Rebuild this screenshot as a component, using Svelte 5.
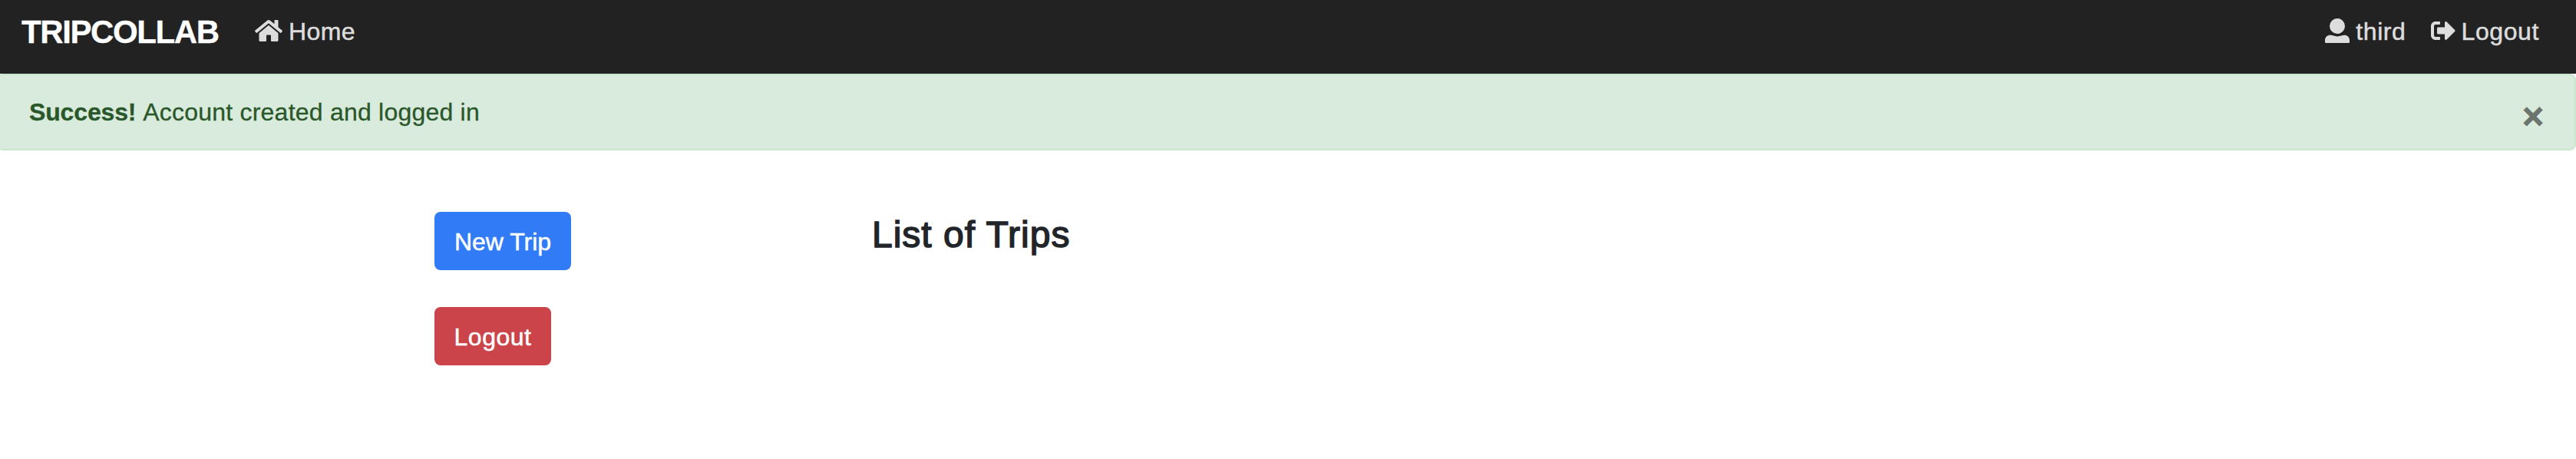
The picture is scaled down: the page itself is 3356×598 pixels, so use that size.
<script>
  const icons = {
    home: { w: 576, d: 'M488 312.7V456c0 13.3-10.7 24-24 24H348c-6.600 0-12-5.400-12-12V356c0-6.600-5.400-12-12-12h-72c-6.600 0-12 5.400-12 12v112c0 6.600-5.400 12-12 12H112c-13.300 0-24-10.700-24-24V312.700c0-3.600 1.600-7 4.400-9.300l188-154.800c4.400-3.600 10.800-3.600 15.300 0l188 154.800c2.700 2.300 4.300 5.700 4.300 9.300zm83.600-60.900L488 182.900V44.400c0-6.600-5.400-12-12-12h-56c-6.600 0-12 5.400-12 12V117l-89.500-73.700c-17.700-14.600-43.300-14.600-61 0L4.400 251.800c-5.100 4.200-5.800 11.800-1.600 16.900l25.500 31c4.200 5.100 11.800 5.800 16.900 1.600l235.200-193.700c4.400-3.600 10.800-3.600 15.300 0l235.200 193.700c5.100 4.200 12.700 3.500 16.900-1.600l25.500-31c4.200-5.200 3.400-12.700-1.700-16.900z' },
    user: { w: 512, d: 'M256 0a160 160 0 1 1 0 320a160 160 0 1 1 0-320zM0 456C0 392 48 349 112 349C168 349 186 374 256 374C326 374 344 349 400 349C464 349 512 392 512 456V496Q512 512 496 512H16Q0 512 0 496z' },
    logout: { w: 512, d: 'M497 273L329 441c-15 15-41 4.500-41-17v-96H152c-13.300 0-24-10.700-24-24v-96c0-13.300 10.700-24 24-24h136V88c0-21.400 25.900-32 41-17l168 168c9.300 9.400 9.300 24.600 0 34zM192 436v-40c0-6.600-5.400-12-12-12H96c-17.700 0-32-14.300-32-32V160c0-17.700 14.300-32 32-32h84c6.600 0 12-5.400 12-12V76c0-6.600-5.400-12-12-12H96c-53 0-96 43-96 96v192c0 53 43 96 96 96h84c6.600 0 12-5.400 12-12z' }
  };
</script>

{#snippet icon(i)}
  <svg viewBox="0 0 {i.w} 512" width={i.w / 16} height="32" aria-hidden="true"><path d={i.d} /></svg>
{/snippet}

<div class="page">
  <nav>
    <a class="brand" href="#top">TRIPCOLLAB</a>
    <a class="link home" href="#home">{@render icon(icons.home)}<span>Home</span></a>
    <div class="right">
      <a class="link" href="#user">{@render icon(icons.user)}<span>third</span></a>
      <a class="link" href="#logout">{@render icon(icons.logout)}<span>Logout</span></a>
    </div>
  </nav>

  <div class="alert" role="alert">
    <p><strong>Success!</strong> <span>Account created and logged in</span></p>
    <button class="close" aria-label="Close">×</button>
  </div>

  <main>
    <div class="actions">
      <button class="btn primary">New Trip</button>
      <button class="btn danger">Logout</button>
    </div>
    <h2>List of Trips</h2>
  </main>
</div>

<style>
  :global(body) {
    margin: 0;
    background: #fff;
  }
  .page {
    height: 598px;
    overflow: hidden;
    font: 32px/48px "Liberation Sans", Arial, sans-serif;
    color: #212529;
  }
  nav {
    box-sizing: border-box;
    height: 96px;
    padding: 17px 48px 0 28px;
    background: #222;
    display: flex;
    align-items: flex-start;
  }
  a {
    text-decoration: none;
  }
  .brand {
    width: 304px;
    color: #fff;
    font-size: 42px;
    line-height: 50px;
    font-weight: 700;
    letter-spacing: -1.4px;
    -webkit-text-stroke: 0.3px #fff;
  }
  .link {
    display: flex;
    color: #ddd;
    letter-spacing: 0.6px;
    -webkit-text-stroke: 0.5px #ddd;
  }
  .link svg {
    margin-top: 7px;
    margin-right: 8px;
    fill: #ddd;
    stroke: none;
  }
  .home {
    letter-spacing: 0.4px;
  }
  .right {
    display: flex;
    gap: 32px;
    margin-left: auto;
  }
  .alert {
    box-sizing: border-box;
    height: 100px;
    margin-left: -4px;
    padding: 22px 40px 0 40px;
    display: flex;
    justify-content: space-between;
    background: #d9ebdc;
    border: 2px solid #c9e6cf;
    border-radius: 8px;
    color: #2a572a;
  }
  p {
    margin: 0;
    padding-top: 2px;
    -webkit-text-stroke: 0.3px #2a572a;
  }
  strong {
    letter-spacing: -0.15px;
  }
  p span {
    letter-spacing: 0.22px;
  }
  .close {
    border: 0;
    padding: 0;
    background: none;
    font: 700 48px/64px "Liberation Sans", Arial, sans-serif;
    height: 64px;
    color: #000;
    opacity: 0.5;
    text-shadow: 0 2px 0 #fff;
    -webkit-text-stroke: 1px #000;
  }
  main {
    display: grid;
    grid-template-columns: 570px 1fr;
    padding: 80px 0 0 566px;
  }
  .actions {
    display: flex;
    flex-direction: column;
    align-items: flex-start;
    gap: 48px;
  }
  .btn {
    box-sizing: border-box;
    height: 76px;
    border: 0;
    border-radius: 8px;
    padding: 1px 0 0;
    font: 32px/48px "Liberation Sans", Arial, sans-serif;
    color: #fff;
    -webkit-text-stroke: 0.5px #fff;
  }
  .primary {
    width: 178px;
    background: #317cf6;
  }
  .danger {
    width: 152px;
    background: #ca444a;
    letter-spacing: 0.5px;
  }
  h2 {
    margin: 0;
    padding-top: 1px;
    font-size: 48px;
    line-height: 58px;
    font-weight: 400;
    letter-spacing: 1px;
    -webkit-text-stroke: 1.5px #212529;
  }
</style>
